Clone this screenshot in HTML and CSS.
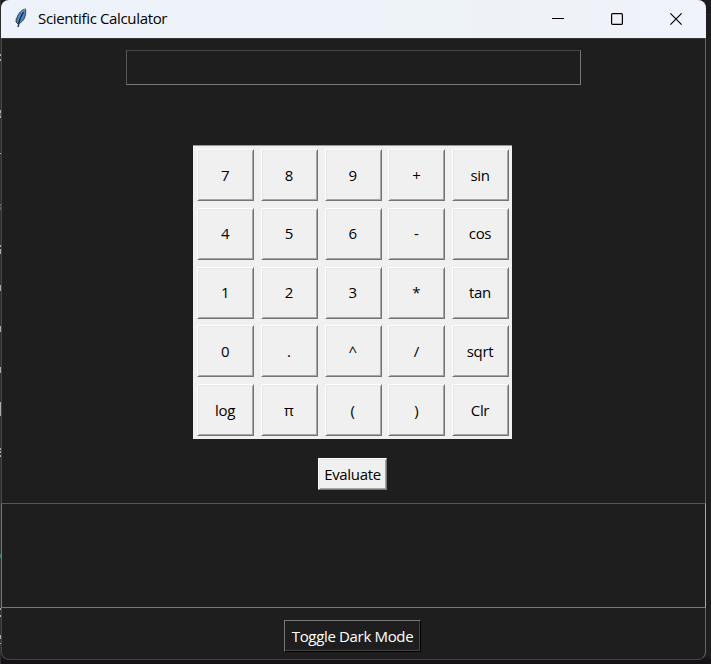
FILE: index.html
```
<!DOCTYPE html>
<html lang="en">
<head>
<meta charset="utf-8">
<title>Scientific Calculator</title>
<link rel="stylesheet" href="styles.css">
</head>
<body>
<svg class="backdrop" width="1" height="664" viewBox="0 0 1 664" shape-rendering="crispEdges">
<path stroke="#a9a9a9" d="M.5 54v2M.5 59v2M.5 110v3M.5 116v2M.5 153v1M.5 245v2M.5 249v5M.5 285v6M.5 326v6M.5 367v6M.5 402v14M.5 448v2M.5 451v2M.5 455v2M.5 608v2M.5 615v2M.5 635v4M.5 643v1"/>
<path stroke="#666" d="M.5 113v3M.5 204v2M.5 207v3"/>
<path stroke="#218568" d="M.5 554v4"/>
</svg>
<div class="window">
  <header class="titlebar">
    <svg class="feather" width="14" height="21" viewBox="0 0 14 21">
      <path d="M11.500 1C8 1.500 4.500 5 3 9.500L2 14l2 2c3.500-1.500 6-4 6.800-7 1-3 1.200-6 .700-8z" fill="#4a86c8" stroke="#3a4450"/>
      <path d="M11.500 1c-2 1-3 2-4 4" stroke="#939eaa" fill="none"/>
      <path d="M9.500 4C7 8 5 12 4.200 19" stroke="#142b49" stroke-width="1.400" fill="none"/>
      <path d="M2.500 10v4" stroke="#555" stroke-width="1.500"/>
    </svg>
    <h1 class="title">Scientific Calculator</h1>
    <div class="controls">
      <svg width="12" height="12" viewBox="0 0 12 12"><path d="M0 5.500h12" stroke="#000"/></svg>
      <svg width="12" height="12" viewBox="0 0 12 12"><rect x=".6" y=".6" width="10.800" height="10.800" rx="1" fill="none" stroke="#000" stroke-width="1.200"/></svg>
      <svg width="12" height="12" viewBox="0 0 12 12"><path d="M.4.400l11.200 11.200M11.600.400L.4 11.600" stroke="#000" stroke-width="1.150"/></svg>
    </div>
  </header>
  <main class="content">
    <input class="entry" type="text" aria-label="Expression">
    <div class="keypad">
      <button class="key">7</button><button class="key">8</button><button class="key">9</button><button class="key">+</button><button class="key">sin</button>
      <button class="key">4</button><button class="key">5</button><button class="key">6</button><button class="key">-</button><button class="key">cos</button>
      <button class="key">1</button><button class="key">2</button><button class="key">3</button><button class="key">*</button><button class="key">tan</button>
      <button class="key">0</button><button class="key">.</button><button class="key">^</button><button class="key">/</button><button class="key">sqrt</button>
      <button class="key">log</button><button class="key">π</button><button class="key">(</button><button class="key">)</button><button class="key">Clr</button>
    </div>
    <button class="key evaluate">Evaluate</button>
    <div class="output"></div>
    <button class="toggle">Toggle Dark Mode</button>
  </main>
</div>
</body>
</html>
```
FILE: styles.css
```
* { box-sizing: border-box; }
body {
  margin: 0;
  height: 664px;
  display: flex;
  overflow: hidden;
  background: linear-gradient(#1e1a1e 0 14px, #292929 14px 15px, #1e1e1e 15px 656px, #151215 660px);
  font-family: "Open Sans", "Noto Sans", sans-serif;
}
.backdrop { flex: none; background: #303030; }
.window {
  width: 705px;
  height: 660px;
  border: 1px solid #444;
  border-right-color: #666;
  border-top: 0;
  border-radius: 8px;
  background: #1e1e1e;
}
.titlebar {
  height: 38px;
  margin: 0 -1px;
  padding: 0 24px 0 13px;
  display: flex;
  align-items: center;
  border-radius: 8px 8px 0 0;
  background: linear-gradient(90deg, #eef2fb, #edf3f8 55%, #eff2f7 80%, #eff3fc);
}
.feather { margin: -2px 10px 0 0; }
.title {
  margin: -2px 0 0;
  font-size: 15px;
  font-weight: 400;
  letter-spacing: -0.35px;
  color: #000;
  white-space: nowrap;
}
.controls { margin-left: auto; display: flex; gap: 47px; }
.controls svg { display: block; }
.content {
  height: 621px;
  padding-right: 2px;
  border-top: 1px solid #353535;
  display: flex;
  flex-direction: column;
  align-items: center;
}
.entry {
  width: 455px;
  height: 35px;
  margin: 11px 0 60px 2px;
  padding: 0 4px;
  border: 1px solid;
  border-color: #444 #777 #777 #555;
  background: #1e1e1e;
  color: #fff;
  outline: 0;
}
.keypad {
  width: 319px;
  height: 294px;
  padding: 3px 3px 3px 4px;
  display: grid;
  grid-template: repeat(5, 52px) / repeat(5, 57px);
  justify-content: space-between;
  align-content: space-between;
  background: #f0f0f0;
  border-top: 1px solid #999;
}
button {
  font: 15px "Open Sans", "Noto Sans", sans-serif;
  letter-spacing: -0.34px;
  white-space: nowrap;
}
.key {
  padding: 0 1px 1px 0;
  border: 1px solid;
  border-color: #fff #747474 #747474 #fff;
  background: #f0f0f0;
  box-shadow: inset 1px 1px #e6e6e6, inset -1px -1px #a5a5a5;
  color: #000;
}
.evaluate { width: 69px; height: 32px; margin: 19px 0 13px; padding: 0; }
.output {
  width: 705px;
  height: 105px;
  margin-right: -2px;
  border: 1px solid;
  border-color: #555 #aaa #777 #777;
}
.toggle {
  width: 137px;
  height: 32px;
  margin-top: 12px;
  padding: 0;
  border: 1px solid;
  border-color: #777 #000 #000 #777;
  background: #1e1e1e;
  box-shadow: inset -1px -1px #444;
  color: #fff;
}
```
